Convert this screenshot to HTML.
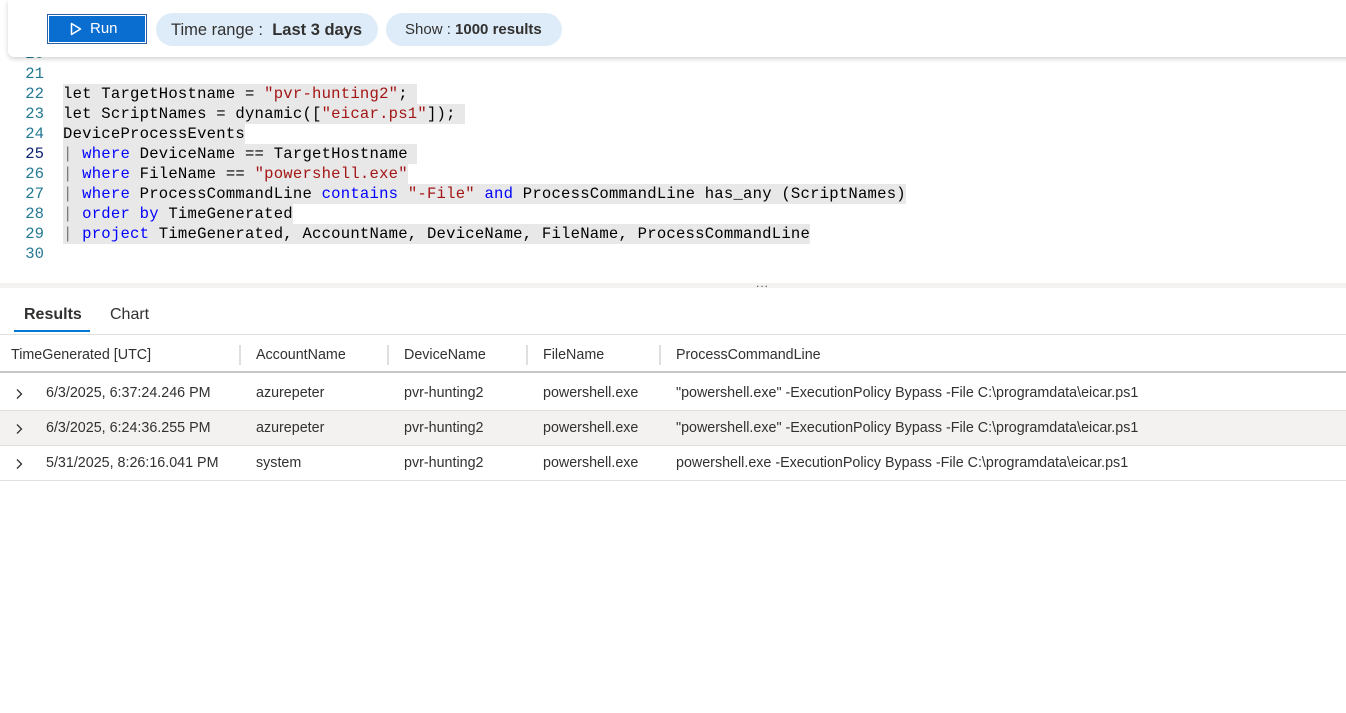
<!DOCTYPE html>
<html><head><meta charset="utf-8"><style>
*{margin:0;padding:0;box-sizing:border-box}
body{width:1346px;height:713px;background:#fff;font-family:"Segoe UI","Liberation Sans",sans-serif;position:relative;overflow:hidden;color:#323130}
.tb{position:absolute;left:8px;top:0;width:1346px;height:57px;background:#fff;box-shadow:0 2px 5px rgba(0,0,0,.18);border-radius:0 0 0 6px;z-index:5}
.run{position:absolute;top:14px;width:100px;height:30px;background:#0a6ed1;border:1px solid #2b5fa8;box-shadow:inset 0 0 0 1px #fff;color:#fff;font-size:15px;line-height:28px}
.pill{position:absolute;top:13px;height:33px;background:#deecf9;border-radius:17px;font-size:16px;line-height:33px;color:#323130}
.code{position:absolute;left:0;top:0;font-family:"Liberation Mono",monospace;font-size:15.6px;}
.ln{position:absolute;left:0;width:44px;text-align:right;color:#237893;height:20px;line-height:20px}
.tx{position:absolute;left:63px;height:20px;line-height:20px;white-space:pre;background:#e8e8e8;color:#000;letter-spacing:0.22px}
.k{color:#0000ff}.s{color:#a31515}.p{color:#777}
.cur{position:absolute;left:63px;right:0;top:143px;height:20px;border-top:1px solid #eee;border-bottom:1px solid #eee}
.row{position:absolute;left:0;width:1346px;height:35px;border-bottom:1px solid #e1dfdd;font-size:14.3px;line-height:35px}
.row span{position:absolute}
.sep{position:absolute;top:7px;width:2px;height:20px;background:#e1dfdd}
.chev{position:absolute;left:15px;top:12px}
</style></head><body>
<div class="tb">
  <div class="run" style="left:39px"><svg width="12" height="14" style="position:absolute;left:22px;top:7px" viewBox="0 0 12 14"><path d="M1.5 1.5 L10.5 7 L1.5 12.5 Z" fill="none" stroke="#fff" stroke-width="1.5" stroke-linejoin="round"/></svg><span style="position:absolute;left:42px">Run</span></div>
  <div class="pill" style="left:148px;width:222px;font-size:16.5px"><span style="position:absolute;left:15px;top:1px">Time range :&nbsp; <b style="font-weight:600">Last 3 days</b></span></div>
  <div class="pill" style="left:378px;width:176px;font-size:15px"><span style="position:absolute;left:19px">Show : <b>1000 results</b></span></div>
</div>
<div class="code">
  <div class="cur"></div>
  <div class="ln" style="top:44px">20</div>
  <div class="ln" style="top:64px">21</div>
  <div class="ln" style="top:84px">22</div><div class="tx" style="top:84px">let TargetHostname = <span class="s">"pvr-hunting2"</span>; </div>
  <div class="ln" style="top:104px">23</div><div class="tx" style="top:104px">let ScriptNames = dynamic([<span class="s">"eicar.ps1"</span>]); </div>
  <div class="ln" style="top:124px">24</div><div class="tx" style="top:124px">DeviceProcessEvents</div>
  <div class="ln" style="top:144px;color:#0b216f">25</div><div class="tx" style="top:144px"><span class="p">|</span> <span class="k">where</span> DeviceName == TargetHostname </div>
  <div class="ln" style="top:164px">26</div><div class="tx" style="top:164px"><span class="p">|</span> <span class="k">where</span> FileName == <span class="s">"powershell.exe"</span></div>
  <div class="ln" style="top:184px">27</div><div class="tx" style="top:184px"><span class="p">|</span> <span class="k">where</span> ProcessCommandLine <span class="k">contains</span> <span class="s">"-File"</span> <span class="k">and</span> ProcessCommandLine has_any (ScriptNames)</div>
  <div class="ln" style="top:204px">28</div><div class="tx" style="top:204px"><span class="p">|</span> <span class="k">order by</span> TimeGenerated</div>
  <div class="ln" style="top:224px">29</div><div class="tx" style="top:224px"><span class="p">|</span> <span class="k">project</span> TimeGenerated, AccountName, DeviceName, FileName, ProcessCommandLine</div>
  <div class="ln" style="top:244px">30</div>
</div>
<div style="position:absolute;left:0;top:283px;width:1346px;height:5px;background:#f3f2f1"></div>
<div style="position:absolute;left:756px;top:276px;font-size:12px;color:#555;letter-spacing:1px">...</div>
<div style="position:absolute;left:24px;top:306px;font-size:16px;font-weight:600;color:#323130">Results</div>
<div style="position:absolute;left:110px;top:306px;font-size:16px;color:#323130">Chart</div>
<div style="position:absolute;left:14px;top:330px;width:76px;height:2px;background:#0078d4"></div>
<div style="position:absolute;left:0;top:334px;width:1346px;height:1px;background:#e1dfdd"></div>
<div class="row" style="top:338px;border-bottom:2px solid #c8c6c4">
  <span style="left:11px">TimeGenerated [UTC]</span><div class="sep" style="left:239px"></div>
  <span style="left:256px">AccountName</span><div class="sep" style="left:387px"></div>
  <span style="left:404px">DeviceName</span><div class="sep" style="left:526px"></div>
  <span style="left:543px">FileName</span><div class="sep" style="left:659px"></div>
  <span style="left:676px">ProcessCommandLine</span>
</div>
<div class="row" style="top:376px"><svg class="chev" width="8" height="12" viewBox="0 0 8 12"><path d="M2 1.5 L6.5 6 L2 10.5" fill="none" stroke="#323130" stroke-width="1.3"/></svg><span style="left:46px">6/3/2025, 6:37:24.246 PM</span><span style="left:256px">azurepeter</span><span style="left:404px">pvr-hunting2</span><span style="left:543px">powershell.exe</span><span style="left:676px">"powershell.exe" -ExecutionPolicy Bypass -File C:\programdata\eicar.ps1</span></div>
<div class="row" style="top:411px;background:#f3f2f1"><svg class="chev" width="8" height="12" viewBox="0 0 8 12"><path d="M2 1.5 L6.5 6 L2 10.5" fill="none" stroke="#323130" stroke-width="1.3"/></svg><span style="left:46px">6/3/2025, 6:24:36.255 PM</span><span style="left:256px">azurepeter</span><span style="left:404px">pvr-hunting2</span><span style="left:543px">powershell.exe</span><span style="left:676px">"powershell.exe" -ExecutionPolicy Bypass -File C:\programdata\eicar.ps1</span></div>
<div class="row" style="top:446px"><svg class="chev" width="8" height="12" viewBox="0 0 8 12"><path d="M2 1.5 L6.5 6 L2 10.5" fill="none" stroke="#323130" stroke-width="1.3"/></svg><span style="left:46px">5/31/2025, 8:26:16.041 PM</span><span style="left:256px">system</span><span style="left:404px">pvr-hunting2</span><span style="left:543px">powershell.exe</span><span style="left:676px">powershell.exe -ExecutionPolicy Bypass -File C:\programdata\eicar.ps1</span></div>
</body></html>
